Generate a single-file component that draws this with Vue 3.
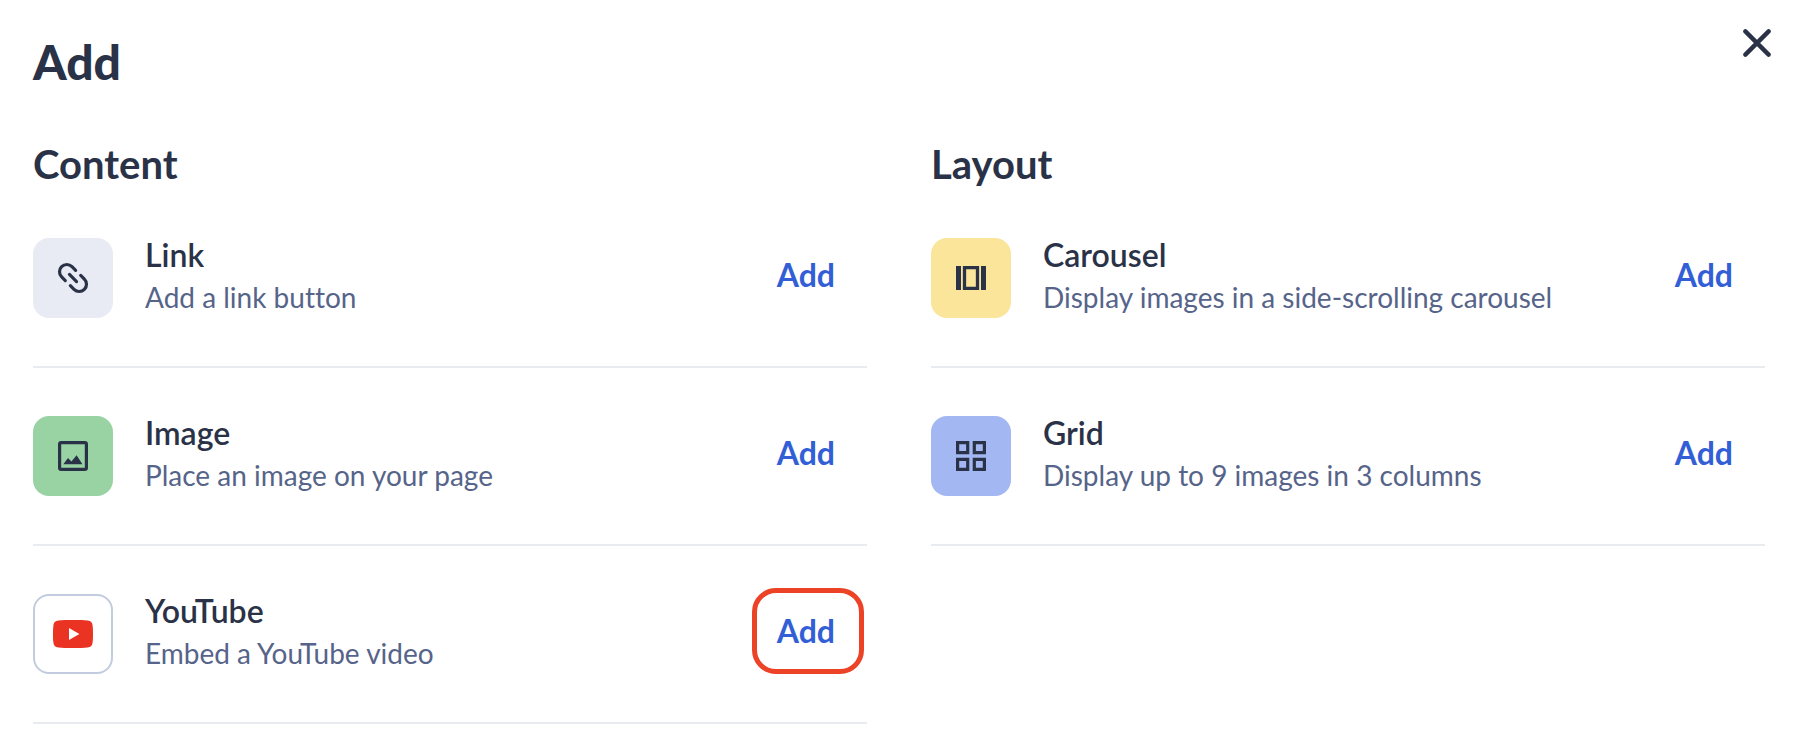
<script setup>
const sections = [
  {
    title: 'Content',
    items: [
      { id: 'link', name: 'Link', text: 'Add a link button' },
      { id: 'image', name: 'Image', text: 'Place an image on your page' },
      { id: 'youtube', name: 'YouTube', text: 'Embed a YouTube video', highlighted: true },
    ],
  },
  {
    title: 'Layout',
    items: [
      { id: 'carousel', name: 'Carousel', text: 'Display images in a side-scrolling carousel' },
      { id: 'grid', name: 'Grid', text: 'Display up to 9 images in 3 columns' },
    ],
  },
]
</script>

<template>
  <main class="panel">
    <header class="header">
      <h1 class="title">Add</h1>
      <button class="close" type="button" aria-label="Close">
        <svg width="28" height="28" viewBox="0 0 28 28" fill="none" stroke="currentColor" stroke-width="4.4" stroke-linecap="round">
          <path d="M2.4 2.4 25.600 25.600M25.600 2.400 2.400 25.600" />
        </svg>
      </button>
    </header>

    <div class="columns">
      <section v-for="section in sections" :key="section.title">
        <h2 class="heading">{{ section.title }}</h2>
        <ul class="list">
          <li v-for="item in section.items" :key="item.id" class="item">
            <span class="tile" :class="item.id">
              <svg v-if="item.id === 'link'" width="32" height="32" viewBox="0 0 32 32" fill="none" stroke="currentColor" stroke-width="3.2" stroke-linecap="round">
                <g transform="rotate(45 16 16)">
                  <path d="M12.400 8.700H7.250a7.300 7.300 0 0 0 0 14.600h5.150M19.600 8.700h5.150a7.300 7.300 0 0 1 0 14.600H19.600M11 16h10" />
                </g>
              </svg>
              <svg v-else-if="item.id === 'image'" width="30" height="30" viewBox="0 0 30 30">
                <rect x="1.6" y="1.6" width="26.8" height="26.8" rx="1.6" fill="none" stroke="currentColor" stroke-width="3.2" />
                <path d="M5.300 23.300 10 17l3.400 3.600 5.200-6.300 5.900 9z" fill="currentColor" />
              </svg>
              <svg v-else-if="item.id === 'youtube'" width="40" height="28" viewBox="0 0 40 28">
                <path d="M20 0c6 0 11 .1 14.500.5C38 .9 39.200 2.500 39.600 5.500 40 8.500 40 11 40 14s0 5.500-.4 8.500c-.4 3-1.600 4.600-5.100 5C31 27.900 26 28 20 28s-11-.1-14.500-.5c-3.500-.4-4.700-2-5.100-5C0 19.500 0 17 0 14s0-5.500.4-8.500c.4-3 1.600-4.600 5.100-5C9 .1 14 0 20 0z" fill="#ea3323" />
                <path d="M16 8l10.400 6L16 20z" fill="#fff" />
              </svg>
              <svg v-else-if="item.id === 'carousel'" width="30" height="24" viewBox="0 0 30 24">
                <path d="M0 0h5v24H0zM25 0h5v24h-5z" fill="currentColor" />
                <path d="M8.500 1.700h13v20.600h-13z" fill="none" stroke="currentColor" stroke-width="3.3" />
              </svg>
              <svg v-else width="30" height="30" viewBox="0 0 30 30" fill="none" stroke="currentColor" stroke-width="3.2">
                <path d="M1.600 1.600h10.100v10.100H1.600zM18.300 1.600h10.100v10.100H18.300zM1.600 18.300h10.100v10.100H1.600zM18.300 18.300h10.100v10.100H18.300z" />
              </svg>
            </span>
            <div class="copy">
              <h3 class="name">{{ item.name }}</h3>
              <p class="text">{{ item.text }}</p>
            </div>
            <button class="add" :class="{ highlighted: item.highlighted }" type="button" :aria-label="`Add ${item.name}`">Add</button>
          </li>
        </ul>
      </section>
    </div>
  </main>
</template>

<style>
body {
  margin: 0;
  background: #fff;
}
</style>

<style scoped>
.panel {
  padding: 28px 35px 24px 33px;
  color: #2a3247;
  font-family: Lato, "Open Sans", sans-serif;
  font-variant-ligatures: no-common-ligatures;
}
h1, h2, h3, p, ul {
  margin: 0;
  padding: 0;
}
button {
  border: 0;
  background: none;
  font: inherit;
  font-variant-ligatures: inherit;
  cursor: pointer;
}
svg {
  display: block;
}
.header {
  display: flex;
  justify-content: space-between;
  align-items: flex-start;
  height: 112px;
}
.title {
  font-size: 48px;
  line-height: 68px;
  font-weight: 900;
}
.close {
  padding: 1px 0;
  margin-right: -6px;
  color: #2a3247;
}
.columns {
  display: grid;
  grid-template-columns: 1fr 1fr;
  gap: 64px;
}
.heading {
  margin-bottom: 2px;
  font-size: 40px;
  line-height: 48px;
  font-weight: 700;
}
.list {
  list-style: none;
}
.item {
  display: flex;
  align-items: center;
  gap: 32px;
  padding: 48px 0;
  border-bottom: 2px solid #e8ebf0;
}
.tile {
  display: flex;
  flex: none;
  align-items: center;
  justify-content: center;
  box-sizing: border-box;
  width: 80px;
  height: 80px;
  border-radius: 16px;
}
.link { background: #e8ebf3; }
.image { background: #99d3a4; }
.youtube { border: 2px solid #c3cbde; }
.carousel { background: #fbe59b; }
.grid { background: #a3b8f3; }
.copy {
  display: grid;
  flex: 1;
  gap: 6px;
  min-width: 0;
}
.name {
  font-size: 32px;
  line-height: 32px;
  font-weight: 600;
}
.text {
  color: #56648a;
  font-size: 28px;
  line-height: 40px;
}
.add {
  position: relative;
  padding: 13px 32px 19px;
  color: #325fd6;
  font-size: 32px;
  line-height: 40px;
  font-weight: 700;
}
.highlighted::after {
  content: "";
  position: absolute;
  inset: -10px 3px -4px 7px;
  border: 5px solid #ec4226;
  border-radius: 24px;
}
</style>
